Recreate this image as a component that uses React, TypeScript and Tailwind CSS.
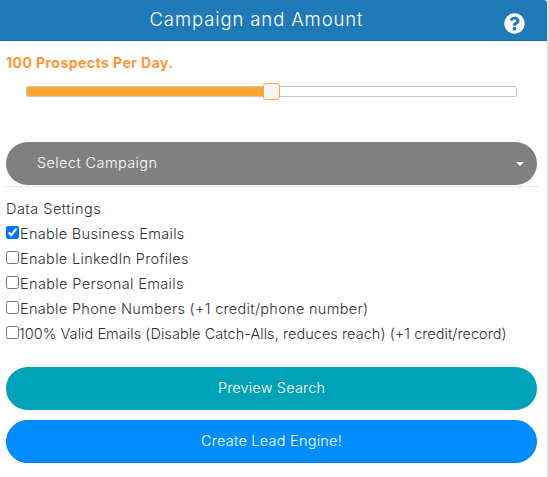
import { FaQuestionCircle } from 'react-icons/fa'

const settings = [
  { label: 'Enable Business Emails', checked: true, spacing: 'ml-px tracking-[0.3px]' },
  { label: 'Enable LinkedIn Profiles', checked: false, spacing: 'ml-px tracking-[0.32px]' },
  { label: 'Enable Personal Emails', checked: false, spacing: 'ml-px tracking-[0.36px]' },
  { label: 'Enable Phone Numbers (+1 credit/phone number)', checked: false, spacing: 'ml-px tracking-[0.31px]' },
  { label: '100% Valid Emails (Disable Catch-Alls, reduces reach) (+1 credit/record)', checked: false, spacing: 'tracking-[0.05px]' },
]

export default function App() {
  return (
    <div className="h-[477px] w-[549px] overflow-hidden border-r-2 border-[#dfdfdf] bg-white font-['Inter',sans-serif] text-[14.5px] text-[#2b3035]">

      <header className="relative flex h-[41px] items-center justify-center rounded-tr-[3px] border-b border-[#1c6ea4] bg-[#1f7ab7] pr-[34px] pb-[2px]">
        <h1 className="text-[18.5px] leading-[38px] font-light tracking-[0.89px] whitespace-nowrap text-white">
          Campaign and Amount
        </h1>
        <FaQuestionCircle className="absolute top-[13px] right-[22px] size-[21px] text-white" />
      </header>

      <main className="flex flex-col pr-[10px] pl-[6px]">
        <p className="mt-[11px] h-[22px] text-[14px] leading-[22px] font-bold tracking-[0.45px] whitespace-nowrap text-[#ff9638]">
          100 Prospects Per Day.
        </p>

        <div className="mt-[9px] ml-[20px] flex h-[17px] w-[491px] items-center">
          <div className="h-[11px] w-[238px] rounded-l-[3px] border border-r-0 border-[#c5c5c5] bg-[#ffa52f]" />
          <div className="z-10 -mx-px h-[17px] w-[17px] shrink-0 rounded-[3px] border border-[#ffa52f] bg-[#f6f6f6]" />
          <div className="h-[11px] flex-1 rounded-r-[3px] border border-l-0 border-[#c5c5c5]" />
        </div>

        <button className="mt-[42px] flex h-[43px] items-center justify-between rounded-full bg-[#808080] pr-[13px] pl-[31px] text-white">
          <span className="pb-[2px] font-light tracking-[0.39px] whitespace-nowrap">Select Campaign</span>
          <span className="mt-[1px] border-x-4 border-t-4 border-x-transparent border-t-white" />
        </button>
        <div className="mt-[1px] border-t border-dotted border-[#d4d4d4]" />

        <p className="mt-[9px] h-[26px] leading-[25px] font-[350] tracking-[0.48px]">Data Settings</p>
        <div className="flex flex-col">
          {settings.map((item) => (
            <label key={item.label} className="flex h-[25px] items-start">
              <input type="checkbox" defaultChecked={item.checked} className="mt-[4px] size-[13px] shrink-0" />
              <span className={`leading-[23px] font-[350] whitespace-nowrap ${item.spacing}`}>{item.label}</span>
            </label>
          ))}
        </div>

        <button className="mt-[20px] h-[43px] rounded-full bg-[#00a2b7] pb-[2px] font-light tracking-[0.16px] text-white">
          Preview Search
        </button>
        <button className="mt-[10px] h-[43px] rounded-full border border-[#007bff] bg-[#008dff] pb-[2px] font-light tracking-[0.24px] text-white">
          Create Lead Engine!
        </button>
      </main>

    </div>
  )
}
